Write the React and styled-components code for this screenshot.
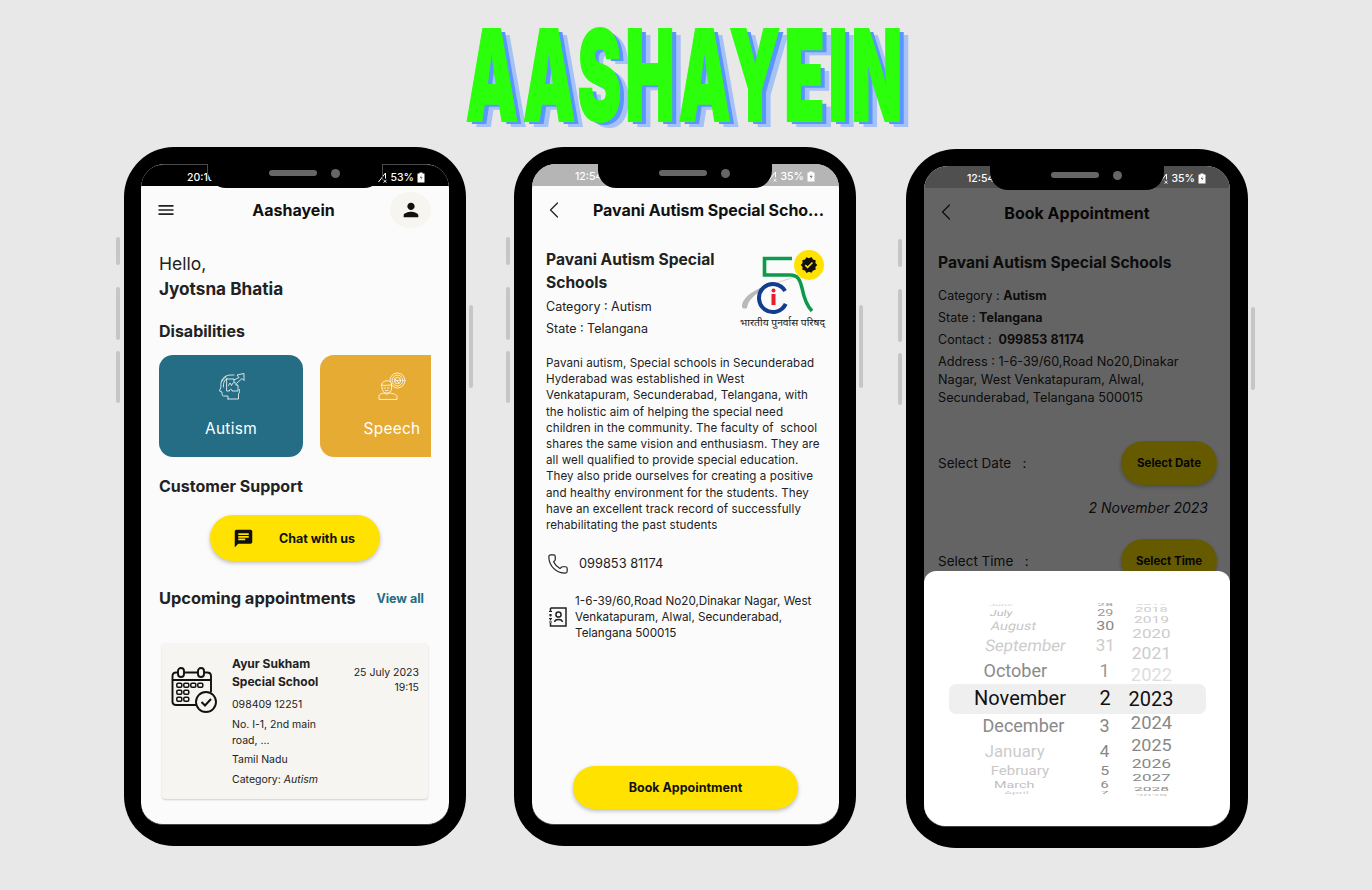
import styled, { createGlobalStyle } from "styled-components";
import { MdMenu, MdPerson, MdChat, MdVerified } from "react-icons/md";
import { ChevronLeft, Phone as PhoneGlyph } from "lucide-react";

const GlobalStyle = createGlobalStyle`
  html, body {
    margin: 0;
    background: #e8e8e8;
  }
  * {
    box-sizing: border-box;
  }
  body {
    font-family: Inter, "Open Sans", sans-serif;
    color: #222;
  }
`;

const Page = styled.div`
  width: 1372px;
  height: 890px;
  display: flex;
  flex-direction: column;
  align-items: center;
`;

const BrandBox = styled.div`
  height: 147px;
  width: 100%;
  display: flex;
  justify-content: center;
  align-items: center;
  padding: 4px 0 0 0;
`;

const Brand = styled.h1`
  margin: 0;
  font-family: Inter, "Liberation Sans", sans-serif;
  font-weight: 900;
  font-size: 66px;
  line-height: 1.2;
  letter-spacing: 3.8px;
  color: #2bff0b;
  -webkit-text-stroke: 1px #2bff0b;
  transform: scaleY(1.92);
  text-shadow: 4.5px 1.8px 0 #5a94ff, 9px 3.6px 0 #a6c1f5;
`;

const PhoneRow = styled.div`
  display: flex;
  width: 100%;
  padding-left: 124px;
`;

const Handset = styled.div`
  position: relative;
  width: 342px;
  height: 699px;
  flex: none;
  margin-top: ${(p) => p.$top || 0}px;
  margin-right: ${(p) => p.$gap || 0}px;
  background: #000;
  border-radius: 50px;
  padding: 17px 17px 0;
`;

const SideKey = styled.span`
  position: absolute;
  width: 4px;
  background: #c6c6c6;
  border-radius: 2px;
  top: ${(p) => p.$y}px;
  height: ${(p) => p.$h}px;
  ${(p) => (p.$right ? "right: -7px;" : "left: -8px;")}
`;

const Notch = styled.div`
  position: absolute;
  z-index: 5;
  top: 17px;
  left: 84px;
  width: 174px;
  height: 24px;
  background: #000;
  border-radius: 0 0 18px 18px;
  display: flex;
  align-items: center;
  justify-content: center;
  gap: 14px;
  padding: 0 0 6px 19px;
`;

const NotchEdge = styled.span`
  position: absolute;
  top: 0;
  left: -1px;
  right: -1px;
  height: 16px;
  border: 1px solid #4a4a4a;
  border-width: 0 1px;
  z-index: -1;
`;

const Speaker = styled.span`
  width: 48px;
  height: 6px;
  border-radius: 3px;
  background: #666;
`;

const Camera = styled.span`
  width: 9px;
  height: 9px;
  border-radius: 50%;
  background: #666;
`;

const Screen = styled.div`
  position: relative;
  width: ${(p) => p.$w}px;
  margin-left: ${(p) => 308 - p.$w && 1}px;
  height: 661px;
  background: #fbfbfb;
  border-radius: 24px 24px 22px 22px;
  overflow: hidden;
  display: flex;
  flex-direction: column;
  border-bottom: 1px solid #444;
`;

const StatusBar = styled.div`
  height: 22px;
  flex: none;
  display: flex;
  align-items: center;
  justify-content: space-between;
  padding: 3px 24px 0 ${(p) => p.$left}px;
  background: ${(p) => p.$bg};
  color: #fff;
  font-size: 10.5px;
  font-weight: 500;
  ${(p) => p.$outline && "border-top: 1px solid #4a4a4a; border-radius: 24px 24px 0 0;"}
`;

const StatusRight = styled.div`
  display: flex;
  align-items: center;
  gap: 3px;
`;

const AppBar = styled.header`
  height: 48px;
  flex: none;
  display: grid;
  grid-template-columns: 1fr auto 1fr;
  align-items: center;
  padding: 0 18px 0 15px;
`;

const DetailBar = styled.header`
  height: 48px;
  flex: none;
  display: flex;
  align-items: center;
  padding-left: 8px;
  gap: ${(p) => p.$gap}px;
`;

const BarTitle = styled.div`
  font-size: 16px;
  font-weight: 700;
  color: #111;
  white-space: nowrap;
  letter-spacing: ${(p) => p.$track || 0}px;
`;

const MenuButton = styled.div`
  display: flex;
  color: #222;
`;

const Avatar = styled.div`
  justify-self: end;
  width: 41px;
  height: 36px;
  border-radius: 50%;
  background: #f6f5f0;
  display: flex;
  align-items: center;
  justify-content: center;
  color: #111;
`;

const Content = styled.div`
  flex: 1;
  display: flex;
  flex-direction: column;
  padding: 18px 18px 0;
`;

const Hello = styled.div`
  font-size: 17.5px;
  line-height: 24px;
`;

const UserName = styled.div`
  font-size: 17.2px;
  font-weight: 700;
  line-height: 24px;
  margin-top: 1px;
`;

const SectionTitle = styled.h2`
  margin: ${(p) => p.$top}px 0 0;
  font-size: 16px;
  font-weight: 700;
  line-height: 20px;
`;

const CategoryRow = styled.div`
  margin-top: 14px;
  display: flex;
  gap: 17px;
  overflow: hidden;
`;

const CategoryCard = styled.div`
  width: 144px;
  height: 102px;
  flex: none;
  border-radius: 14px;
  background: ${(p) => p.$bg};
  display: flex;
  flex-direction: column;
  align-items: center;
  padding-top: 17px;
  color: #fff;
`;

const CategoryIcon = styled.svg`
  width: 28px;
  height: 28px;
  fill: none;
  stroke: #fff;
  stroke-width: 0.8;
  stroke-linejoin: round;
  stroke-linecap: round;
`;

const CategoryLabel = styled.div`
  margin-top: 18px;
  font-size: 15.4px;
  line-height: 22px;
  font-weight: 400;
  letter-spacing: 0.3px;
`;

const ChatButton = styled.button`
  align-self: center;
  margin-top: 19px;
  width: 170px;
  height: 46px;
  border: 0;
  border-radius: 23px;
  background: #ffe200;
  box-shadow: 0 2px 4px rgba(0, 0, 0, 0.25);
  display: flex;
  align-items: center;
  padding: 0 0 0 23px;
  gap: 25px;
  font: inherit;
  font-size: 12.5px;
  font-weight: 700;
  color: #111;
`;

const UpcomingHead = styled.div`
  margin-top: 27px;
  padding-right: 7px;
  display: flex;
  justify-content: space-between;
  align-items: center;
`;

const UpcomingTitle = styled.h2`
  margin: 0;
  font-size: 16.4px;
  font-weight: 700;
  line-height: 20px;
`;

const ViewAll = styled.a`
  font-size: 12.5px;
  font-weight: 700;
  color: #256d85;
`;

const AppointmentCard = styled.div`
  margin: 35px 0 0 3px;
  width: 266px;
  background: #f6f5f1;
  border-radius: 4px;
  box-shadow: 0 1px 2px rgba(0, 0, 0, 0.18);
  display: flex;
  padding: 12px 9px 11px;
`;

const CalendarIcon = styled.svg`
  width: 47px;
  height: 47px;
  flex: none;
  margin: 12px 14px 0 0;
  fill: none;
  stroke: #111;
  stroke-width: 1.9;
`;

const AppointmentInfo = styled.div`
  width: 108px;
  flex: none;
`;

const AppointmentName = styled.div`
  font-size: 12px;
  font-weight: 700;
  line-height: 18px;
`;

const SmallLine = styled.div`
  font-size: 10.5px;
  line-height: 16px;
  margin-top: ${(p) => p.$top || 0}px;
  color: #222;
  em {
    font-style: italic;
  }
`;

const AppointmentDate = styled.div`
  flex: 1;
  margin-top: 10px;
  text-align: right;
  font-size: 10.5px;
  line-height: 15px;
  white-space: nowrap;
`;

const DetailBody = styled.div`
  flex: 1;
  display: flex;
  flex-direction: column;
  padding-top: 14px;
`;

const SchoolHead = styled.div`
  display: flex;
  justify-content: space-between;
  padding: 0 13px 0 14px;
`;

const SchoolName = styled.h2`
  margin: 0;
  font-size: 15.6px;
  font-weight: 700;
  line-height: 23px;
`;

const Fact = styled.div`
  font-size: 12.5px;
  line-height: 22px;
  margin-top: ${(p) => p.$top || 0}px;
  b {
    font-weight: 700;
  }
`;

const LogoMark = styled.svg`
  width: 86px;
  height: 84px;
  flex: none;
  margin-top: 2px;
`;

const LogoCaption = styled.text`
  font-family: "Noto Sans", "DejaVu Sans", sans-serif;
  font-size: 10px;
  fill: #222;
`;

const About = styled.p`
  margin: 15px 0 0;
  padding-left: 14px;
  font-size: 11.6px;
  letter-spacing: 0.08px;
  line-height: 16.2px;
  white-space: nowrap;
`;

const ContactRow = styled.div`
  margin-top: ${(p) => p.$top}px;
  padding-left: ${(p) => p.$left}px;
  display: flex;
  align-items: center;
  gap: ${(p) => p.$gap}px;
  font-size: ${(p) => p.$size}px;
  line-height: ${(p) => p.$line}px;
  white-space: nowrap;
`;

const BookButton = styled.button`
  align-self: center;
  margin: auto 0 15px;
  width: 225px;
  height: 43px;
  border: 0;
  border-radius: 22px;
  background: #ffe200;
  box-shadow: 0 2px 4px rgba(0, 0, 0, 0.25);
  font: inherit;
  font-size: 12.5px;
  font-weight: 700;
  color: #111;
`;

const BookBar = styled.header`
  height: 49px;
  flex: none;
  position: relative;
  display: flex;
  align-items: center;
  justify-content: center;
`;

const BackSlot = styled.div`
  position: absolute;
  left: 8px;
  top: 10px;
  display: flex;
`;

const BookBody = styled.div`
  padding: 14px 13px 0 14px;
  display: flex;
  flex-direction: column;
`;

const Address = styled.div`
  margin-top: 2px;
  font-size: 12.7px;
  line-height: 18px;
  white-space: nowrap;
`;

const PickRow = styled.div`
  margin-top: ${(p) => p.$top}px;
  display: flex;
  align-items: center;
  justify-content: space-between;
  font-size: 13.5px;
`;

const PickLabel = styled.span`
  white-space: pre;
`;

const PickButton = styled.button`
  width: 96px;
  height: 44px;
  border: 0;
  border-radius: 22px;
  background: #ffe200;
  font: inherit;
  font-size: 11.5px;
  font-weight: 700;
  color: #111;
  box-shadow: 0 2px 4px rgba(0, 0, 0, 0.25);
`;

const PickedDate = styled.div`
  margin-top: 13px;
  padding-right: 9px;
  text-align: right;
  font-size: 14px;
  line-height: 20px;
  font-style: italic;
`;

const Dim = styled.div`
  position: absolute;
  inset: 22px 0 0 0;
  background: rgba(0, 0, 0, 0.6);
`;

const Sheet = styled.div`
  position: absolute;
  top: 405px;
  left: 0;
  right: 0;
  bottom: 0;
  background: #fff;
  border-radius: 12px 12px 0 0;
  padding: 32px 0 0 46px;
`;

const Wheel = styled.div`
  position: relative;
  height: 193px;
  display: flex;
  overflow: hidden;
  font-family: Roboto, sans-serif;
  font-size: 20px;
`;

const WheelBand = styled.div`
  position: absolute;
  top: 81px;
  left: -21px;
  width: 257px;
  height: 30px;
  background: #efefef;
  border-radius: 7px;
`;

const BandHolder = styled.div`
  position: absolute;
  left: 46px;
  top: 32px;
  width: 260px;
  height: 193px;
`;

const WheelColumn = styled.div`
  position: relative;
  width: ${(p) => p.$w}px;
  margin-right: ${(p) => p.$after || 0}px;
  flex: none;
  display: flex;
  flex-direction: column;
`;

const WheelItem = styled.div`
  height: ${(p) => p.$h}px;
  flex: none;
  display: flex;
  align-items: center;
  justify-content: center;
  white-space: nowrap;
  color: ${(p) => p.$c};
  & > span {
    display: block;
    transform: translate(${(p) => p.$dx || 0}px, ${(p) => p.$dy || 0}px)
      skewX(${(p) => p.$skew || 0}deg) scale(${(p) => p.$sx}, ${(p) => p.$sy});
  }
`;

// label, row height, x scale, y scale, colour, skew, x nudge, y nudge
const months = [
  ["June", 4, 0.55, 0.14, "#ccc", -12, -19],
  ["July", 12, 0.62, 0.42, "#bbb", -12, -19],
  ["August", 17, 0.72, 0.6, "#c8c8c8", -12, -6, -2],
  ["September", 22.5, 0.83, 0.8, "#ccc", -8, 6, -2],
  ["October", 26, 0.9, 0.95, "#8a8a8a", 0, -5, -2],
  ["November", 27.5, 1, 1, "#111", 0, 0],
  ["December", 26.5, 0.9, 0.95, "#8a8a8a", 0, 3],
  ["January", 22.5, 0.84, 0.8, "#ccc", 0, -5, 1],
  ["February", 17.5, 0.75, 0.6, "#c8c8c8", 0, 0, 1],
  ["March", 12, 0.72, 0.42, "#c0c0c0", 0, -6],
  ["April", 5.5, 0.6, 0.14, "#ccc", 0, -4],
];

const days = [
  ["28", 4, 0.7, 0.2, "#999"],
  ["29", 12, 0.72, 0.42, "#999"],
  ["30", 17, 0.8, 0.6, "#888", 0, 0, -2],
  ["31", 22.5, 0.85, 0.8, "#ccc", 0, 0, -2],
  ["1", 26, 0.9, 0.95, "#999", 0, 0, -2],
  ["2", 27.5, 1, 1, "#111"],
  ["3", 26.5, 0.9, 0.95, "#888"],
  ["4", 22.5, 0.85, 0.8, "#888", 0, 0, 1],
  ["5", 17.5, 0.8, 0.6, "#888", 0, 0, 1],
  ["6", 12, 0.72, 0.42, "#888"],
  ["7", 5.5, 0.7, 0.14, "#888"],
];

const years = [
  ["2017", 2, 0.7, 0.1, "#ccc"],
  ["2018", 10, 0.72, 0.32, "#ccc"],
  ["2019", 12.5, 0.78, 0.45, "#ccc", 0, 0, -1],
  ["2020", 17.5, 0.85, 0.62, "#ccc", 0, 0, -2],
  ["2021", 21, 0.88, 0.8, "#ccc", 0, 0, -3],
  ["2022", 22, 0.92, 0.92, "#ddd", 0, 0, -2],
  ["2023", 23.5, 1, 1, "#111", 0, 0, -1],
  ["2024", 23.5, 0.92, 0.92, "#888"],
  ["2025", 20.5, 0.9, 0.8, "#888"],
  ["2026", 16.5, 0.88, 0.62, "#888"],
  ["2027", 12.5, 0.85, 0.46, "#888"],
  ["2028", 8.5, 0.78, 0.3, "#888"],
  ["2029", 5, 0.7, 0.14, "#bbb"],
];

const WheelList = ({ items, width, after }) => (
  <WheelColumn $w={width} $after={after}>
    {items.map(([label, h, sx, sy, c, skew, dx, dy]) => (
      <WheelItem key={label} $h={h} $sx={sx} $sy={sy} $c={c} $skew={skew} $dx={dx} $dy={dy}>
        <span>{label}</span>
      </WheelItem>
    ))}
  </WheelColumn>
);

const SignalIcon = () => (
  <svg width="9" height="11" viewBox="0 0 9 11">
    <path d="M0.5 10 L7.5 1 V6.5" fill="none" stroke="#fff" strokeWidth="1" />
    <path d="M5.5 8 L8.5 10.5 M8.5 8 L5.5 10.5" stroke="#fff" strokeWidth="0.9" />
  </svg>
);

const BatteryIcon = () => (
  <svg width="8" height="11" viewBox="0 0 8 11">
    <path d="M2.5 0.5 H5.5 V1.5 H7.5 V10.5 H0.5 V1.5 H2.5 Z" fill="#fff" />
    <path d="M4.6 3 L2.8 6 H4.2 L3.5 8.5 L5.4 5.2 H4 Z" fill="#555" />
  </svg>
);

const ContactBookIcon = () => (
  <svg width="18" height="20" viewBox="0 0 18 20" fill="none" stroke="#222" strokeWidth="1.5">
    <path d="M1.5 1 H17 V19 H1.5 V16 M1.5 4 V1 M1.5 7 V9.5 M1.5 12 V13.5" />
    <path d="M0 4.5 H3 M0 8 H3 M0 11.5 H3 M0 15 H3" strokeWidth="1.2" />
    <circle cx="9.5" cy="7.5" r="2.6" />
    <path d="M5.7 15 C5.7 11.5 13.3 11.5 13.3 15" />
  </svg>
);

const AutismGlyph = () => (
  <CategoryIcon viewBox="0 0 28 28">
    <path d="M11 27 H21.5 V22 C22.5 21 22.5 19 22.5 17.5" />
    <path d="M11 27 V24 H6.5 C5 24 5 22 5 20 L2.5 19 L4 15 C3 8 7 3 14 3 H17" />
    <path d="M5.5 9 C6 7 7.5 5.5 9 5 M6.5 15 C6 12 7 8 10 6.5" />
    <path d="M10 7 H17 V11 C19 10 20 12 18.5 13 H21 V19 H15 C15.5 17.5 13.5 16.5 12.5 18 V19 H10 Z" />
    <path d="M11.5 13.5 L13 11 L14.5 13.5 L16 11" />
    <path d="M17 8 L22 5.5 L20 3 L27 1.5 L27 8.5 L25 6.5 L20 11" />
  </CategoryIcon>
);

const SpeechGlyph = () => (
  <CategoryIcon viewBox="0 0 28 28">
    <circle cx="19.5" cy="8.5" r="7.5" />
    <circle cx="19.5" cy="8.5" r="5.4" />
    <circle cx="19.5" cy="8.5" r="3.2" />
    <path d="M17 9 L22 8 M17 7 L21 11" />
    <path d="M3.5 13 C3.5 8 13 7 13.5 12 V17 C13.5 20 10.5 21 8.5 21 C6 21 4 19 4 16 Z" fill="#e5ab33" />
    <path d="M3.5 13 C6 14 10 13 13.5 13 M6 16 H7.5 M9.5 16 H11 M7.5 18.5 H10" />
    <path d="M1 27 V24 C1 22.5 3 21.5 6 21 C7.5 22.5 10 22.5 11.5 21 C15 21.5 19 22.5 19 24.5 V27 Z" />
  </CategoryIcon>
);

const calendarDots = [
  [8, 18], [15, 18], [22, 18], [29, 18],
  [8, 25], [15, 25],
  [8, 32], [15, 32],
];

const CalendarGlyph = () => (
  <CalendarIcon viewBox="0 0 47 47">
    <path d="M25 38 H5 C2.5 38 1.5 36.5 1.5 35 V9 C1.5 6.5 3 5.5 5 5.5 H7 M13 5.5 H27 M33 5.5 H36 C38.5 5.5 40 7 40 9 V25" />
    <path d="M1.5 13 H40" />
    <rect x="7" y="1" width="6" height="9" rx="3" />
    <rect x="27" y="1" width="6" height="9" rx="3" />
    {calendarDots.map(([x, y]) => (
      <rect key={`${x}-${y}`} x={x - 2.2} y={y - 1.8} width="5" height="4" rx="1.2" strokeWidth="1.5" />
    ))}
    <circle cx="35" cy="35" r="10" fill="#f6f5f1" />
    <path d="M30.5 35 L34 38.5 L40 32" strokeWidth="2" />
  </CalendarIcon>
);

const RciLogo = () => (
  <LogoMark viewBox="10 10 86 84">
    <path d="M12 66 C12 58 24 48 46 43 C30 50 18 58 17 68 C15 69 12 69 12 66 Z" fill="#b9b9b9" />
    <path d="M46 43 L68 36" stroke="#d4d4d4" strokeWidth="1.2" />
    <path d="M62 18.5 H34.5 V35 H60 C68 35 70 40 72 48 C74 58 77 66 82 71" fill="none" stroke="#0d9a4a" strokeWidth="3.6" />
    <path d="M55.1 51 A14 14 0 1 0 55.7 63.9" fill="none" stroke="#123d8f" strokeWidth="4" />
    <circle cx="43.5" cy="50.5" r="2" fill="#e3202b" />
    <rect x="41.5" y="54" width="4" height="11" fill="#e3202b" />
    <circle cx="79" cy="25" r="15" fill="#ffe200" />
    <LogoCaption x="10" y="86" textLength="85" lengthAdjust="spacingAndGlyphs">
      भारतीय पुनर्वास परिषद्
    </LogoCaption>
    <foreignObject x="70" y="16" width="18" height="18">
      <MdVerified size={18} color="#111" />
    </foreignObject>
  </LogoMark>
);

const HandsetShell = ({ top, gap, edge, width, children }) => (
  <Handset $top={top} $gap={gap}>
    <SideKey $y={90} $h={28} />
    <SideKey $y={140} $h={53} />
    <SideKey $y={204} $h={52} />
    <SideKey $right $y={158} $h={83} />
    <Notch>
      {edge && <NotchEdge />}
      <Speaker />
      <Camera />
    </Notch>
    <Screen $w={width}>{children}</Screen>
  </Handset>
);

const Status = ({ time, level, bg, left, outline }) => (
  <StatusBar $bg={bg} $left={left} $outline={outline}>
    <span>{time}</span>
    <StatusRight>
      <SignalIcon />
      <span>{level}</span>
      <BatteryIcon />
    </StatusRight>
  </StatusBar>
);

const HomeScreen = () => (
  <>
    <Status time="20:16" level="53%" bg="#000" left={46} outline />
    <AppBar>
      <MenuButton>
        <MdMenu size={20} />
      </MenuButton>
      <BarTitle>Aashayein</BarTitle>
      <Avatar>
        <MdPerson size={22} />
      </Avatar>
    </AppBar>
    <Content>
      <Hello>Hello,</Hello>
      <UserName>Jyotsna Bhatia</UserName>
      <SectionTitle $top={20}>Disabilities</SectionTitle>
      <CategoryRow>
        <CategoryCard $bg="#256d85">
          <AutismGlyph />
          <CategoryLabel>Autism</CategoryLabel>
        </CategoryCard>
        <CategoryCard $bg="#e5ab33">
          <SpeechGlyph />
          <CategoryLabel>Speech</CategoryLabel>
        </CategoryCard>
      </CategoryRow>
      <SectionTitle $top={19}>Customer Support</SectionTitle>
      <ChatButton>
        <MdChat size={21} />
        Chat with us
      </ChatButton>
      <UpcomingHead>
        <UpcomingTitle>Upcoming appointments</UpcomingTitle>
        <ViewAll>View all</ViewAll>
      </UpcomingHead>
      <AppointmentCard>
        <CalendarGlyph />
        <AppointmentInfo>
          <AppointmentName>
            Ayur Sukham
            <br />
            Special School
          </AppointmentName>
          <SmallLine $top={6}>098409 12251</SmallLine>
          <SmallLine $top={4}>
            No. I-1, 2nd main
            <br />
            road, ...
          </SmallLine>
          <SmallLine $top={3}>Tamil Nadu</SmallLine>
          <SmallLine $top={4}>
            Category: <em>Autism</em>
          </SmallLine>
        </AppointmentInfo>
        <AppointmentDate>
          25 July 2023
          <br />
          19:15
        </AppointmentDate>
      </AppointmentCard>
    </Content>
  </>
);

const SchoolScreen = () => (
  <>
    <Status time="12:54" level="35%" bg="#b5b5b5" left={43} />
    <DetailBar $gap={25}>
      <ChevronLeft size={28} strokeWidth={1.1} />
      <BarTitle $track={-0.05}>Pavani Autism Special Scho...</BarTitle>
    </DetailBar>
    <DetailBody>
      <SchoolHead>
        <div>
          <SchoolName>
            Pavani Autism Special
            <br />
            Schools
          </SchoolName>
          <Fact $top={2}>Category : Autism</Fact>
          <Fact>State : Telangana</Fact>
        </div>
        <RciLogo />
      </SchoolHead>
      <About>
        Pavani autism, Special schools in Secunderabad
        <br />
        Hyderabad was established in West
        <br />
        Venkatapuram, Secunderabad, Telangana, with
        <br />
        the holistic aim of helping the special need
        <br />
        children in the community. The faculty of&nbsp; school
        <br />
        shares the same vision and enthusiasm. They are
        <br />
        all well qualified to provide special education.
        <br />
        They also pride ourselves for creating a positive
        <br />
        and healthy environment for the students. They
        <br />
        have an excellent track record of successfully
        <br />
        rehabilitating the past students
      </About>
      <ContactRow $top={19} $left={15} $gap={10} $size={12.8} $line={24}>
        <PhoneGlyph size={22} strokeWidth={1.3} />
        099853 81174
      </ContactRow>
      <ContactRow $top={17} $left={17} $gap={8} $size={11.7} $line={16}>
        <ContactBookIcon />
        <div>
          1-6-39/60,Road No20,Dinakar Nagar, West
          <br />
          Venkatapuram, Alwal, Secunderabad,
          <br />
          Telangana 500015
        </div>
      </ContactRow>
      <BookButton>Book Appointment</BookButton>
    </DetailBody>
  </>
);

const BookingScreen = () => (
  <>
    <Status time="12:54" level="35%" bg="#4f4f4f" left={43} />
    <BookBar>
      <BackSlot>
        <ChevronLeft size={28} strokeWidth={1.1} />
      </BackSlot>
      <BarTitle>Book Appointment</BarTitle>
    </BookBar>
    <BookBody>
      <SchoolName>Pavani Autism Special Schools</SchoolName>
      <Fact $top={11}>
        Category : <b>Autism</b>
      </Fact>
      <Fact>
        State : <b>Telangana</b>
      </Fact>
      <Fact>
        Contact :&nbsp; <b>099853 81174</b>
      </Fact>
      <Address>
        Address : 1-6-39/60,Road No20,Dinakar
        <br />
        Nagar, West Venkatapuram, Alwal,
        <br />
        Secunderabad, Telangana 500015
      </Address>
      <PickRow $top={34}>
        <PickLabel>Select Date   :</PickLabel>
        <PickButton>Select Date</PickButton>
      </PickRow>
      <PickedDate>2 November 2023</PickedDate>
      <PickRow $top={21}>
        <PickLabel>Select Time   :</PickLabel>
        <PickButton>Select Time</PickButton>
      </PickRow>
    </BookBody>
    <Dim />
    <Sheet>
      <BandHolder>
        <WheelBand />
      </BandHolder>
      <Wheel>
        <WheelList items={months} width={100} after={15} />
        <WheelList items={days} width={40} />
        <WheelList items={years} width={52} />
      </Wheel>
    </Sheet>
  </>
);

export default function App() {
  return (
    <Page>
      <GlobalStyle />
      <BrandBox>
        <Brand>AASHAYEIN</Brand>
      </BrandBox>
      <PhoneRow>
        <HandsetShell gap={48} edge width={308}>
          <HomeScreen />
        </HandsetShell>
        <HandsetShell gap={50} width={307}>
          <SchoolScreen />
        </HandsetShell>
        <HandsetShell top={2} width={306}>
          <BookingScreen />
        </HandsetShell>
      </PhoneRow>
    </Page>
  );
}
